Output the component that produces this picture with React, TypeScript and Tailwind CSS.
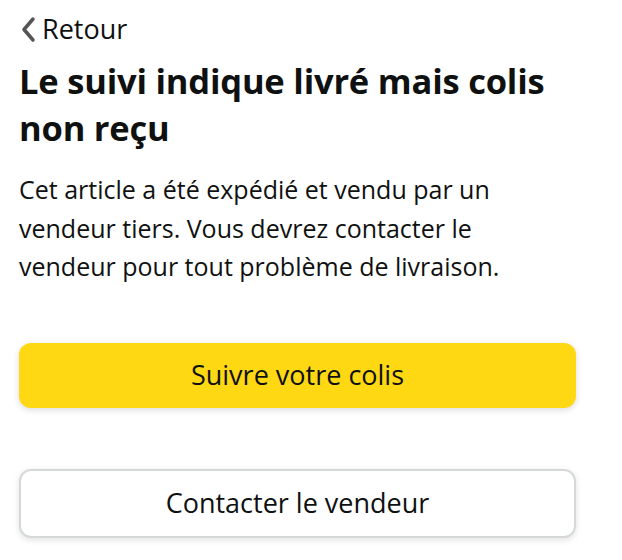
export default function App() {
  return (
    <div className="min-h-screen bg-white text-[#0f1111] font-['Open_Sans',sans-serif]">
      <div className="w-[557px] pl-[19px] pt-[12px] box-content">
        {/* back link */}
        <a className="flex items-center h-[34px] text-[27px] leading-[34px] text-[#0f1111]">
          <svg width="23" height="34" viewBox="0 0 23 34" className="shrink-0">
            <path d="M14 7 L5 17.5 L14 28" fill="none" stroke="#555" strokeWidth="3.5" strokeLinecap="round" strokeLinejoin="round" />
          </svg>
          <span>Retour</span>
        </a>

        <h1 className="mt-[11px] text-[34.5px] leading-[47px] font-bold tracking-[-0.2px] text-[#0f1111]">
          Le suivi indique livré mais colis non reçu
        </h1>

        <p className="mt-[19px] w-[500px] text-[25px] leading-[38.5px]">
          Cet article a été expédié et vendu par un vendeur tiers. Vous devrez contacter le vendeur pour tout problème de livraison.
        </p>

        <div className="mt-[57px] flex flex-col gap-[61px]">
          <button className="h-[65px] w-full rounded-[12px] bg-[#ffd814] text-[27px] text-[#0f1111] shadow-[0_2px_6px_rgba(15,17,17,0.15)]">
            Suivre votre colis
          </button>
          <button className="h-[69px] w-full rounded-[12px] border-2 border-[#d5d9d9] bg-white text-[27px] text-[#0f1111] shadow-[0_2px_6px_rgba(15,17,17,0.12)]">
            Contacter le vendeur
          </button>
        </div>
      </div>
    </div>
  );
}
